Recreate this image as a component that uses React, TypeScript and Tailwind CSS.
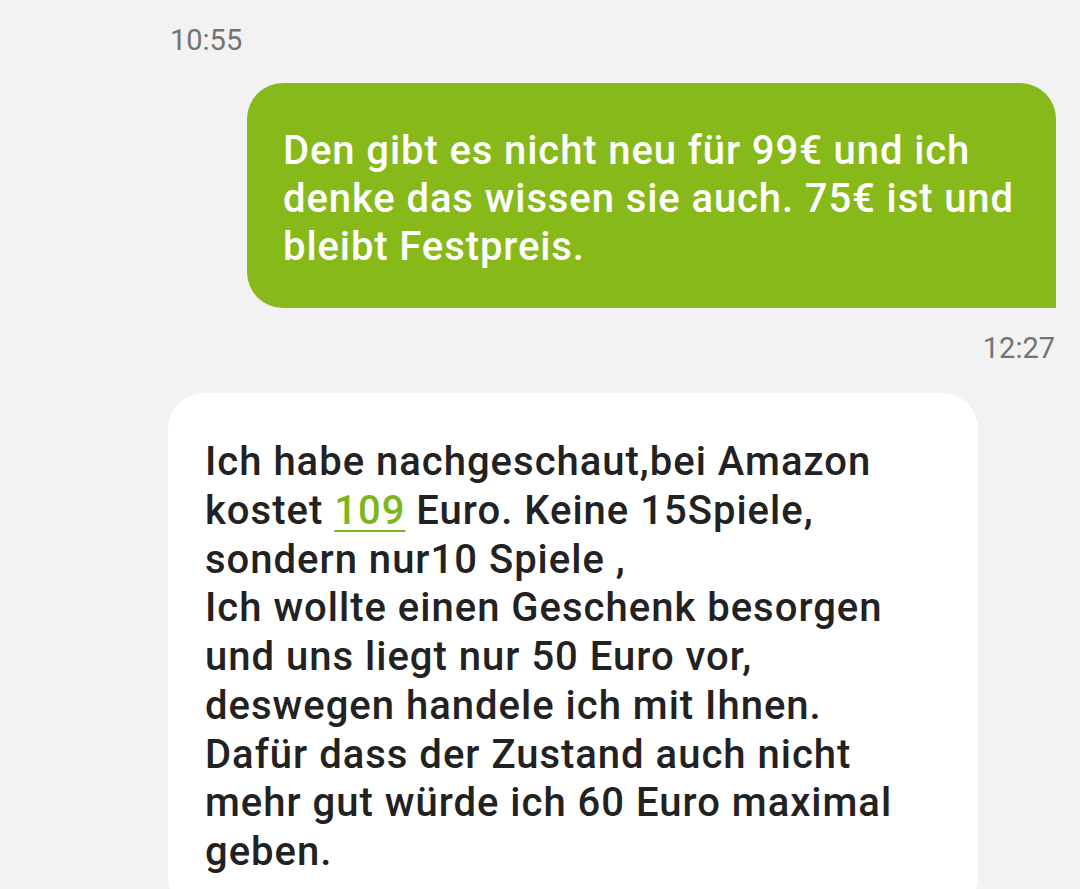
export default function App() {
  return (
    <div className="h-[889px] w-[1080px] overflow-hidden bg-[#f2f2f2] font-['Roboto',sans-serif]">
      <div className="pl-[170px] pt-[22px] text-[29px] leading-[36px] text-[#737373]">10:55</div>
      <div className="mt-[25px] flex justify-end pr-[24px]">
        <div className="w-[809px] rounded-tl-[36px] rounded-tr-[36px] rounded-bl-[36px] bg-[#87b91a] pl-[36px] pr-[20px] pt-[44px] pb-[37px] text-[40px] font-medium leading-[48px] tracking-[0.9px] text-white">
          Den gibt es nicht neu für 99€ und ich
          <br />
          denke das wissen sie auch. 75€ ist und
          <br />
          bleibt Festpreis.
        </div>
      </div>
      <div className="mt-[22px] pr-[25px] text-right text-[29px] leading-[36px] text-[#737373]">12:27</div>
      <div className="mt-[27px] pl-[168px]">
        <div className="w-[810px] rounded-[36px] bg-white pl-[37px] pr-[20px] pt-[45px] pb-[36px] text-[40px] font-medium leading-[48.75px] tracking-[1px] text-[#222222]">
          Ich habe nachgeschaut,bei Amazon
          <br />
          kostet <span className="text-[#7db61c] underline decoration-[2px] underline-offset-[6px]">109</span> Euro. Keine 15Spiele,
          <br />
          sondern nur10 Spiele ,
          <br />
          Ich wollte einen Geschenk besorgen
          <br />
          und uns liegt nur 50 Euro vor,
          <br />
          deswegen handele ich mit Ihnen.
          <br />
          Dafür dass der Zustand auch nicht
          <br />
          mehr gut würde ich 60 Euro maximal
          <br />
          geben.
        </div>
      </div>
    </div>
  );
}
